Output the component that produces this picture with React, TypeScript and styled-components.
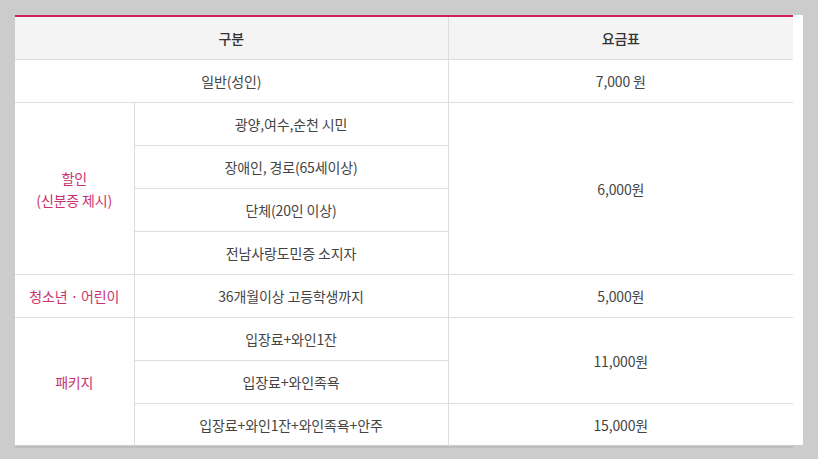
import styled, { createGlobalStyle } from "styled-components";

const GlobalStyle = createGlobalStyle`
  html, body {
    margin: 0;
    padding: 0;
    background: #cccccc;
  }
  body {
    font-family: "Noto Sans CJK KR", "Noto Sans", sans-serif;
  }
`;

const Page = styled.div`
  padding: 15px;
`;

const Panel = styled.div`
  width: 778px;
  height: 430px;
  padding-right: 10px;
  background: #ffffff;
`;

const Table = styled.table`
  width: 778px;
  table-layout: fixed;
  border-collapse: collapse;
  border-top: 2px solid #d01f5a;
  border-bottom: 2px solid #bdbdbd;
`;

const Th = styled.th`
  height: 42px;
  padding: 0;
  background: #f4f4f4;
  border-bottom: 1px solid #dddddd;
  border-left: 1px solid #dddddd;
  font-size: 14px;
  font-weight: 500;
  color: #333333;
  letter-spacing: -0.01em;
  text-align: center;
  &:first-child {
    border-left: none;
  }
`;

const Td = styled.td<{ $pink?: boolean }>`
  height: 42px;
  padding: 0;
  border-top: 1px solid #dddddd;
  border-left: 1px solid #dddddd;
  font-size: 14px;
  line-height: 22px;
  color: ${(props) => (props.$pink ? "#c9326c" : "#444444")};
  letter-spacing: -0.01em;
  text-align: center;
  vertical-align: middle;
`;

const GroupTd = styled(Td)`
  border-left: none;
`;

type Row = { group?: string; span?: number; item: string; price?: string; priceSpan?: number };

const rows: Row[] = [
  { group: "할인\n(신분증 제시)", span: 4, item: "광양,여수,순천 시민", price: "6,000원", priceSpan: 4 },
  { item: "장애인, 경로(65세이상)" },
  { item: "단체(20인 이상)" },
  { item: "전남사랑도민증 소지자" },
  { group: "청소년 · 어린이", span: 1, item: "36개월이상 고등학생까지", price: "5,000원", priceSpan: 1 },
  { group: "패키지", span: 3, item: "입장료+와인1잔", price: "11,000원", priceSpan: 2 },
  { item: "입장료+와인족욕" },
  { item: "입장료+와인1잔+와인족욕+안주", price: "15,000원", priceSpan: 1 },
];

const App = () => {
  return (
    <Page>
      <GlobalStyle />
      <Panel>
        <Table>
          <colgroup>
            <col style={{ width: 119 }} />
            <col style={{ width: 314 }} />
            <col style={{ width: 345 }} />
          </colgroup>
          <thead>
            <tr>
              <Th colSpan={2}>구분</Th>
              <Th>요금표</Th>
            </tr>
          </thead>
          <tbody>
            <tr>
              <GroupTd colSpan={2}>일반(성인)</GroupTd>
              <Td>7,000 원</Td>
            </tr>
            {rows.map((row, i) => (
              <tr key={i}>
                {row.group && (
                  <GroupTd $pink rowSpan={row.span}>
                    {row.group.split("\n").map((line, j) => (
                      <div key={j}>{line}</div>
                    ))}
                  </GroupTd>
                )}
                <Td>{row.item}</Td>
                {row.price && <Td rowSpan={row.priceSpan}>{row.price}</Td>}
              </tr>
            ))}
          </tbody>
        </Table>
      </Panel>
    </Page>
  );
};

export default App;
